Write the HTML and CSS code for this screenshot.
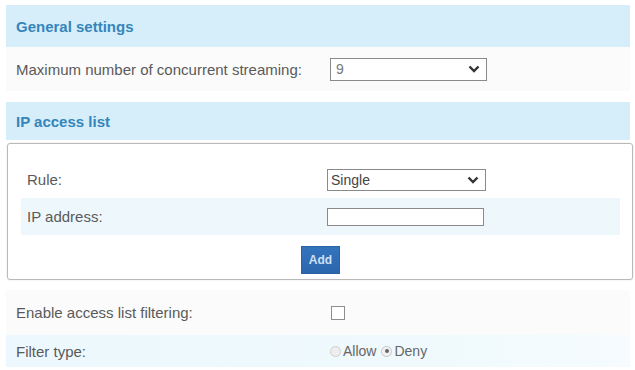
FILE: index.html
```html
<!DOCTYPE html>
<html lang="en">

<head>
  <meta charset="UTF-8" />
  <title>Streaming settings</title>
  <link rel="stylesheet" href="styles.css">
</head>

<body>
  <div class="page">
    <div class="section-title first">General settings</div>
    <div class="row plain">
      <span class="label">Maximum number of concurrent streaming:</span>
      <div class="select wide">
        <span>9</span>
        <svg width="12" height="8" viewBox="0 0 12 8"><path d="M1.5 1.5 L6 6 L10.5 1.5" fill="none" stroke="#333" stroke-width="2.4"/></svg>
      </div>
    </div>

    <div class="section-title second">IP access list</div>
    <div class="rule-box">
      <div class="box-row">
        <span class="label">Rule:</span>
        <div class="select">
          <span class="dark">Single</span>
          <svg width="12" height="8" viewBox="0 0 12 8"><path d="M1.5 1.5 L6 6 L10.5 1.5" fill="none" stroke="#333" stroke-width="2.4"/></svg>
        </div>
      </div>
      <div class="box-row tinted">
        <span class="label">IP address:</span>
        <input class="text-input" type="text" />
      </div>
      <div class="actions">
        <button class="add-btn">Add</button>
      </div>
    </div>

    <div class="row plain enable">
      <span class="label">Enable access list filtering:</span>
      <span class="checkbox"></span>
    </div>
    <div class="row tinted filter">
      <span class="label">Filter type:</span>
      <div class="radios">
        <span class="radio off"></span><span class="radio-text">Allow</span>
        <span class="radio on"></span><span class="radio-text">Deny</span>
      </div>
    </div>
  </div>
</body>

</html>
```

FILE: styles.css
```css
body {
  margin: 0;
  background-color: #fff;
  font-family: "Liberation Sans", Arial, sans-serif;
  font-size: 15px;
  color: #5a5a5a;
}

.page {
  padding: 5px 5px 0 6px;
}

.section-title {
  background-color: #d6eefa;
  color: #3585bb;
  font-weight: bold;
  padding-left: 10px;
  display: flex;
  align-items: center;
}

.section-title.first {
  height: 42px;
}

.section-title.second {
  height: 38px;
  margin-top: 11px;
}

.row {
  display: grid;
  grid-template-columns: 314px 1fr;
  align-items: center;
  padding-left: 10px;
}

.row.plain {
  background-color: #fbfbfb;
  height: 44px;
}

.row.enable {
  height: 45px;
  margin-top: 10px;
}

.row.tinted {
  background: linear-gradient(to right, #ecf8fd, #f0fafd 70%, #f5fbfe);
}

.row.filter {
  height: 32px;
}

.select {
  width: 148px;
  height: 20px;
  border: 1px solid #8a8a8a;
  background-color: #fff;
  display: flex;
  align-items: center;
  justify-content: space-between;
  padding: 0 6px 0 3px;
  font-size: 14px;
  color: #777;
}

.select.wide {
  height: 21px;
  padding-left: 5px;
  width: 144px;
}

.select .dark {
  color: #444;
}

.rule-box {
  margin: 3px -3px 0 1px;
  border: 1px solid #b9b9b9;
  border-radius: 3px;
  box-shadow: 0 0 2px rgba(0, 0, 0, 0.12);
  padding: 17px 12px 5px 13px;
}

.box-row {
  display: grid;
  grid-template-columns: 300px 1fr;
  align-items: center;
  height: 37px;
  padding-left: 6px;
}

.box-row.tinted {
  background-color: #eef8fc;
}

.text-input {
  width: 155px;
  height: 16px;
  border: 1px solid #8a8a8a;
  padding: 0;
  margin: 0;
  background-color: #fff;
}

.actions {
  display: flex;
  justify-content: center;
  margin-top: 11px;
}

.add-btn {
  width: 39px;
  height: 28px;
  border: 1px solid #2a62a6;
  background: linear-gradient(#3474bd, #2b66ad);
  color: #cfe0f5;
  font-family: "Liberation Sans", Arial, sans-serif;
  font-weight: bold;
  font-size: 12px;
  padding: 0;
}

.checkbox {
  width: 12px;
  height: 12px;
  border: 1px solid #8e8e8e;
  background-color: #fff;
  margin-left: 1px;
}

.radios {
  display: flex;
  align-items: center;
  font-size: 14px;
  color: #666;
}

.radio {
  width: 11px;
  height: 11px;
  border-radius: 50%;
  border: 1px solid #cfcfcf;
  background-color: #eee;
  box-sizing: border-box;
  margin-right: 2px;
  position: relative;
}

.radio.on {
  margin-left: 5px;
  border-color: #c6c6c6;
  background-color: #f2f2f2;
}

.radio.on::after {
  content: "";
  position: absolute;
  left: 2.5px;
  top: 2.5px;
  width: 4px;
  height: 4px;
  border-radius: 50%;
  background-color: #666;
}
```
